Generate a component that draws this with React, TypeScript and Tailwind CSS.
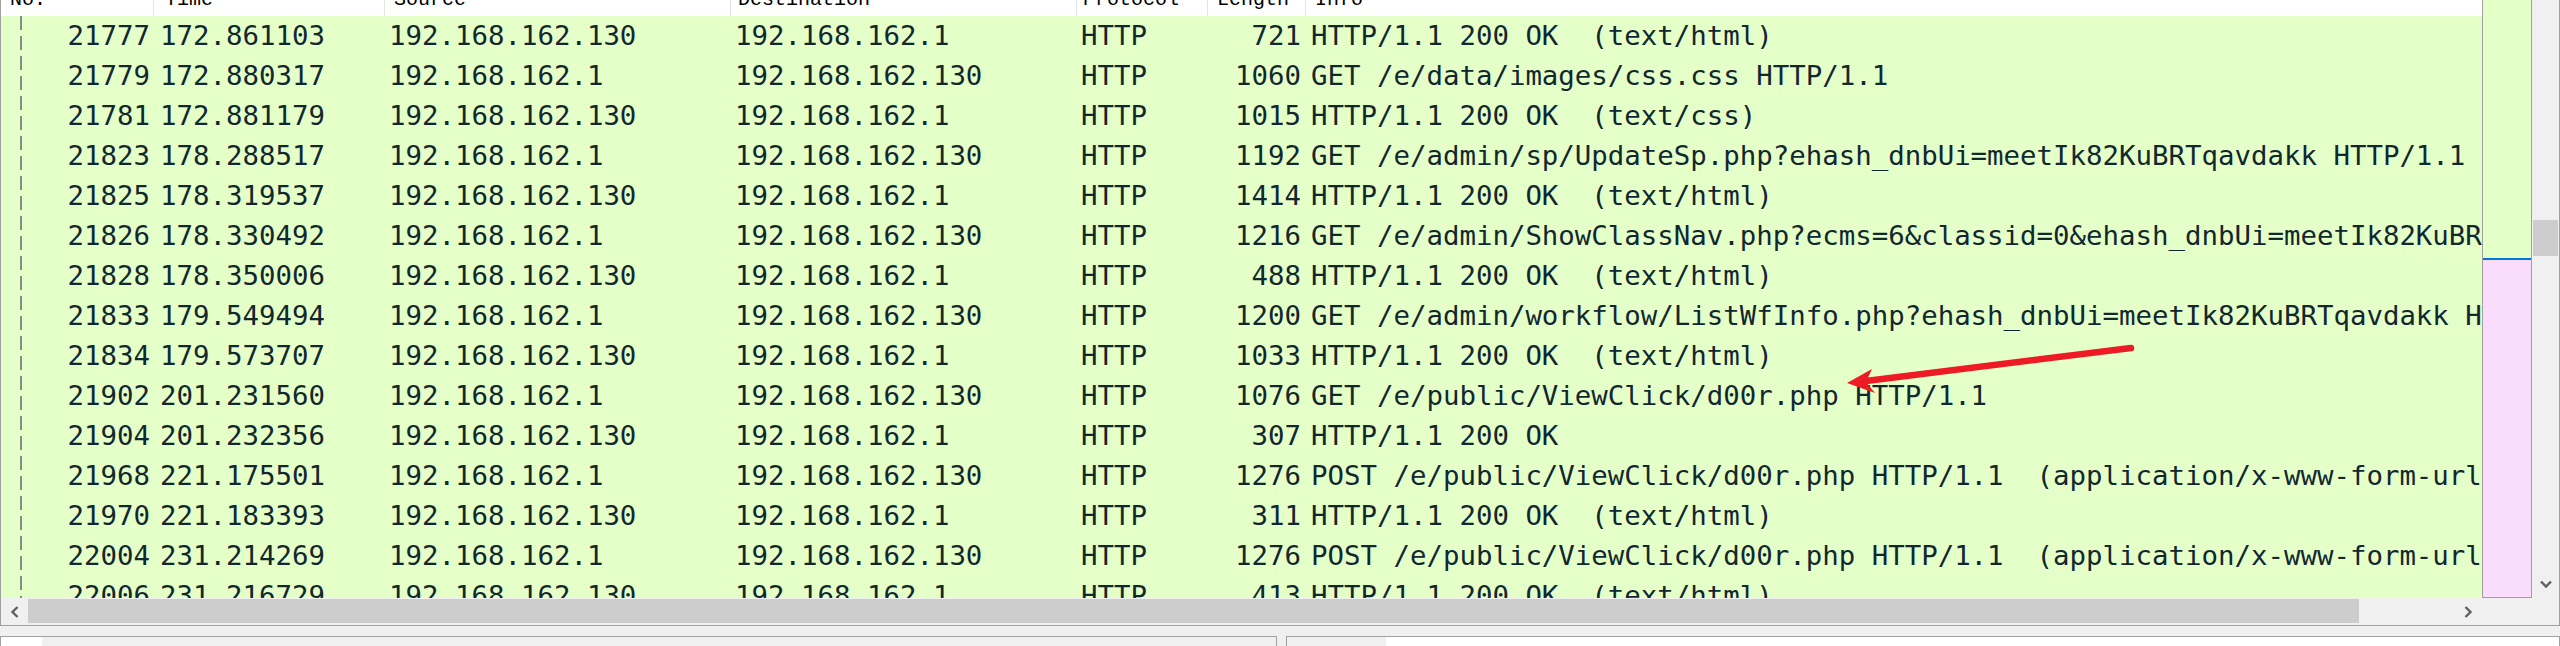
import React from "react";

const rows: string[][] = [
  ["21777", "172.861103", "192.168.162.130", "192.168.162.1", "HTTP", "721", "HTTP/1.1 200 OK  (text/html)"],
  ["21779", "172.880317", "192.168.162.1", "192.168.162.130", "HTTP", "1060", "GET /e/data/images/css.css HTTP/1.1"],
  ["21781", "172.881179", "192.168.162.130", "192.168.162.1", "HTTP", "1015", "HTTP/1.1 200 OK  (text/css)"],
  ["21823", "178.288517", "192.168.162.1", "192.168.162.130", "HTTP", "1192", "GET /e/admin/sp/UpdateSp.php?ehash_dnbUi=meetIk82KuBRTqavdakk HTTP/1.1"],
  ["21825", "178.319537", "192.168.162.130", "192.168.162.1", "HTTP", "1414", "HTTP/1.1 200 OK  (text/html)"],
  ["21826", "178.330492", "192.168.162.1", "192.168.162.130", "HTTP", "1216", "GET /e/admin/ShowClassNav.php?ecms=6&classid=0&ehash_dnbUi=meetIk82KuBRTqavdakk HTTP/1.1"],
  ["21828", "178.350006", "192.168.162.130", "192.168.162.1", "HTTP", "488", "HTTP/1.1 200 OK  (text/html)"],
  ["21833", "179.549494", "192.168.162.1", "192.168.162.130", "HTTP", "1200", "GET /e/admin/workflow/ListWfInfo.php?ehash_dnbUi=meetIk82KuBRTqavdakk HTTP/1.1"],
  ["21834", "179.573707", "192.168.162.130", "192.168.162.1", "HTTP", "1033", "HTTP/1.1 200 OK  (text/html)"],
  ["21902", "201.231560", "192.168.162.1", "192.168.162.130", "HTTP", "1076", "GET /e/public/ViewClick/d00r.php HTTP/1.1"],
  ["21904", "201.232356", "192.168.162.130", "192.168.162.1", "HTTP", "307", "HTTP/1.1 200 OK"],
  ["21968", "221.175501", "192.168.162.1", "192.168.162.130", "HTTP", "1276", "POST /e/public/ViewClick/d00r.php HTTP/1.1  (application/x-www-form-urlencoded)"],
  ["21970", "221.183393", "192.168.162.130", "192.168.162.1", "HTTP", "311", "HTTP/1.1 200 OK  (text/html)"],
  ["22004", "231.214269", "192.168.162.1", "192.168.162.130", "HTTP", "1276", "POST /e/public/ViewClick/d00r.php HTTP/1.1  (application/x-www-form-urlencoded)"],
  ["22006", "231.216729", "192.168.162.130", "192.168.162.1", "HTTP", "413", "HTTP/1.1 200 OK  (text/html)"],
];

function HeaderCell({ label, className }: { label: string; className: string }) {
  return (
    <div className={"h-[16px] overflow-hidden flex items-end " + className}>
      <span className="leading-[20px] mb-[6px] whitespace-pre">{label}</span>
    </div>
  );
}

function Chevron({ dir }: { dir: "left" | "right" | "down" }) {
  if (dir === "down") {
    return (
      <svg width="12" height="9" viewBox="0 0 12 9">
        <polyline points="1,1.5 6,6.5 11,1.5" fill="none" stroke="#606060" strokeWidth="2.4" />
      </svg>
    );
  }
  return (
    <svg width="9" height="12" viewBox="0 0 9 12">
      <polyline
        points={dir === "left" ? "7.5,1 2.5,6 7.5,11" : "1.5,1 6.5,6 1.5,11"}
        fill="none"
        stroke="#606060"
        strokeWidth="2.4"
      />
    </svg>
  );
}

export default function App() {
  return (
    <div className="relative w-[2560px] h-[646px] bg-[#f0f0f0] overflow-hidden flex flex-col">
      {/* Packet list pane */}
      <div className="h-[626px] flex flex-col border-l border-r border-b border-[#a0a0a0]">
        <div className="h-[598px] flex">
          {/* table */}
          <div className="w-[2481px] flex flex-col bg-white overflow-hidden">
            <div className="h-[16px] flex bg-white text-[#000] font-['Liberation_Mono',monospace] text-[20px]">
              <HeaderCell label="No." className="w-[153px] pl-[9px] border-r border-[#e5e5e5]" />
              <HeaderCell label="Time" className="w-[231px] pl-[11px] border-r border-[#e5e5e5]" />
              <HeaderCell label="Source" className="w-[346px] pl-[9px] border-r border-[#e5e5e5]" />
              <HeaderCell label="Destination" className="w-[346px] pl-[7px] border-r border-[#e5e5e5]" />
              <HeaderCell label="Protocol" className="w-[131px] pl-[6px] border-r border-[#e5e5e5]" />
              <HeaderCell label="Length" className="w-[98px] pl-[9px] border-r border-[#e5e5e5]" />
              <HeaderCell label="Info" className="flex-1 pl-[9px]" />
            </div>
            <div className="h-[582px] overflow-hidden flex flex-col font-['DejaVu_Sans_Mono',monospace] text-[27.4px] leading-[40px] text-[#12272e]">
              {rows.map((r) => (
                <div key={r[0]} className="h-[40px] shrink-0 flex bg-[#e4ffc7] whitespace-pre">
                  <div className="w-[153px] flex">
                    <div className="ml-[19px] w-[2px] h-full bg-[repeating-linear-gradient(to_bottom,#8a8a8a_0px,#8a8a8a_14px,transparent_14px,transparent_20px)]" />
                    <div className="flex-1 text-right pr-[4px]">{r[0]}</div>
                  </div>
                  <div className="w-[231px] pl-[6px] overflow-hidden">{r[1]}</div>
                  <div className="w-[346px] pl-[4px] overflow-hidden">{r[2]}</div>
                  <div className="w-[346px] pl-[4px] overflow-hidden">{r[3]}</div>
                  <div className="w-[131px] pl-[4px] overflow-hidden">{r[4]}</div>
                  <div className="w-[98px] pr-[5px] text-right overflow-hidden">{r[5]}</div>
                  <div className="flex-1 pl-[5px] overflow-hidden">{r[6]}</div>
                </div>
              ))}
            </div>
          </div>
          {/* minimap */}
          <div className="w-[50px] h-full flex flex-col border-l border-r border-b border-[#a0a0a0]">
            <div className="h-[258px] bg-[#e4ffc7]" />
            <div className="h-[2px] bg-[#0078d7]" />
            <div className="flex-1 bg-[#fadcfc]" />
          </div>
          {/* vertical scrollbar */}
          <div className="w-[27px] h-full flex flex-col bg-[#f0f0f0]">
            <div className="h-[220px]" />
            <div className="h-[36px] mx-px bg-[#cdcdcd]" />
            <div className="flex-1" />
            <div className="h-[27px] flex items-center justify-center">
              <Chevron dir="down" />
            </div>
          </div>
        </div>
        {/* horizontal scrollbar row */}
        <div className="h-[27px] flex">
          <div className="w-[2481px] flex bg-[#f0f0f0]">
            <div className="w-[27px] flex items-center justify-center">
              <Chevron dir="left" />
            </div>
            <div className="w-[2331px] mt-px mb-[2px] bg-[#cdcdcd]" />
            <div className="flex-1" />
            <div className="w-[27px] flex items-center justify-center">
              <Chevron dir="right" />
            </div>
          </div>
          <div className="flex-1 bg-[#f0f0f0]" />
        </div>
      </div>

      {/* splitter gap */}
      <div className="h-[10px] shrink-0" />

      {/* lower panes */}
      <div className="flex-1 flex gap-[9px]">
        <div className="w-[1277px] flex border-l border-t border-r border-[#a0a0a0]">
          <div className="w-[41px] bg-white" />
          <div className="flex-1 bg-[#f0f0f0]" />
        </div>
        <div className="flex-1 flex border-l border-t border-r border-[#a0a0a0]">
          <div className="w-[99px] bg-[#f0f0f0]" />
          <div className="flex-1 bg-white" />
        </div>
      </div>

      {/* red annotation arrow */}
      <svg
        className="absolute inset-0 pointer-events-none"
        width="2560"
        height="646"
        viewBox="0 0 2560 646"
      >
        <line x1="2131" y1="348" x2="1866" y2="381" stroke="#ed1c24" strokeWidth="6.5" strokeLinecap="round" />
        <polygon points="1847,383 1872,369 1866,382 1875,393" fill="#ed1c24" />
      </svg>
    </div>
  );
}
